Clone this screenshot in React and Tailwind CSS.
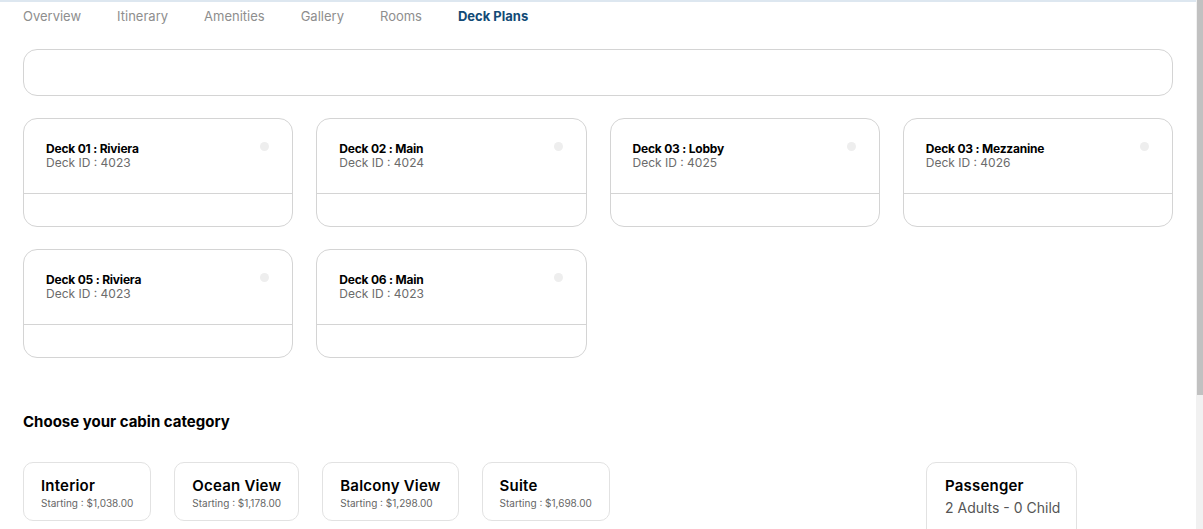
import React from "react";

const tabs = ["Overview", "Itinerary", "Amenities", "Gallery", "Rooms", "Deck Plans"];

const decks = [
  { name: "Deck 01 : Riviera", id: "4023" },
  { name: "Deck 02 : Main", id: "4024" },
  { name: "Deck 03 : Lobby", id: "4025" },
  { name: "Deck 03 : Mezzanine", id: "4026" },
  { name: "Deck 05 : Riviera", id: "4023" },
  { name: "Deck 06 : Main", id: "4023" },
];

const cabins = [
  { name: "Interior", price: "$1,038.00" },
  { name: "Ocean View", price: "$1,178.00" },
  { name: "Balcony View", price: "$1,298.00" },
  { name: "Suite", price: "$1,698.00" },
];

const DeckCard = ({ name, id }) => (
  <div className="h-[109px] rounded-[14px] border border-[#d4d4d4] bg-white flex flex-col">
    <div className="h-[75px] border-b border-[#d4d4d4] flex justify-between pl-[22px] pr-[23px] pt-[23px]">
      <div className="leading-[14px]">
        <div className="text-[12px] font-bold text-black tracking-[-0.2px]">{name}</div>
        <div className="text-[12px] text-[#6b6b6b]">Deck ID : {id}</div>
      </div>
      <div className="w-[9px] h-[9px] rounded-full bg-[#eeeeee]" />
    </div>
  </div>
);

const App = () => {
  return (
    <div className="h-[529px] overflow-hidden flex bg-white font-['Inter',sans-serif]">
      <div className="flex-1 border-t-2 border-[#dde7f0]">
        <div className="px-[23px]">
          <nav className="flex gap-[36px] h-[30px] items-center text-[13px] text-[#8e8e8e]">
            {tabs.map((t) => (
              <span
                key={t}
                className={t === "Deck Plans" ? "font-bold text-[#124a76]" : ""}
              >
                {t}
              </span>
            ))}
          </nav>

          <div className="mt-[17px] h-[47px] rounded-[14px] border border-[#d4d4d4]" />

          <div className="mt-[22px] grid grid-cols-4 gap-x-[23px] gap-y-[22px]">
            {decks.map((d, i) => (
              <DeckCard key={i} {...d} />
            ))}
          </div>

          <h3 className="mt-[53px] text-[15px] font-bold text-black">
            Choose your cabin category
          </h3>

          <div className="mt-[28px] flex gap-[23px]">
            {cabins.map((c) => (
              <div
                key={c.name}
                className="h-[59px] rounded-[10px] border border-[#e2e2e2] px-[17px] pt-[14px]"
              >
                <div className="text-[15px] font-semibold text-black leading-[18px] tracking-[0.2px]">
                  {c.name}
                </div>
                <div className="text-[10px] text-[#666] mt-[1px]">
                  Starting : {c.price}
                </div>
              </div>
            ))}
            <div className="ml-auto mr-[96px] w-[151px] h-[80px] rounded-[10px] border border-[#e2e2e2] pl-[18px] pt-[14px]">
              <div className="text-[15px] font-semibold text-black leading-[18px] tracking-[0.2px]">
                Passenger
              </div>
              <div className="text-[14px] text-[#555] mt-[2px]">2 Adults - 0 Child</div>
            </div>
          </div>
        </div>
      </div>
      <div className="w-[7px] bg-[#f1f1f1] flex flex-col">
        <div className="h-[395px] bg-[#c1c1c1] ml-[1px]" />
      </div>
    </div>
  );
};

export default App;
